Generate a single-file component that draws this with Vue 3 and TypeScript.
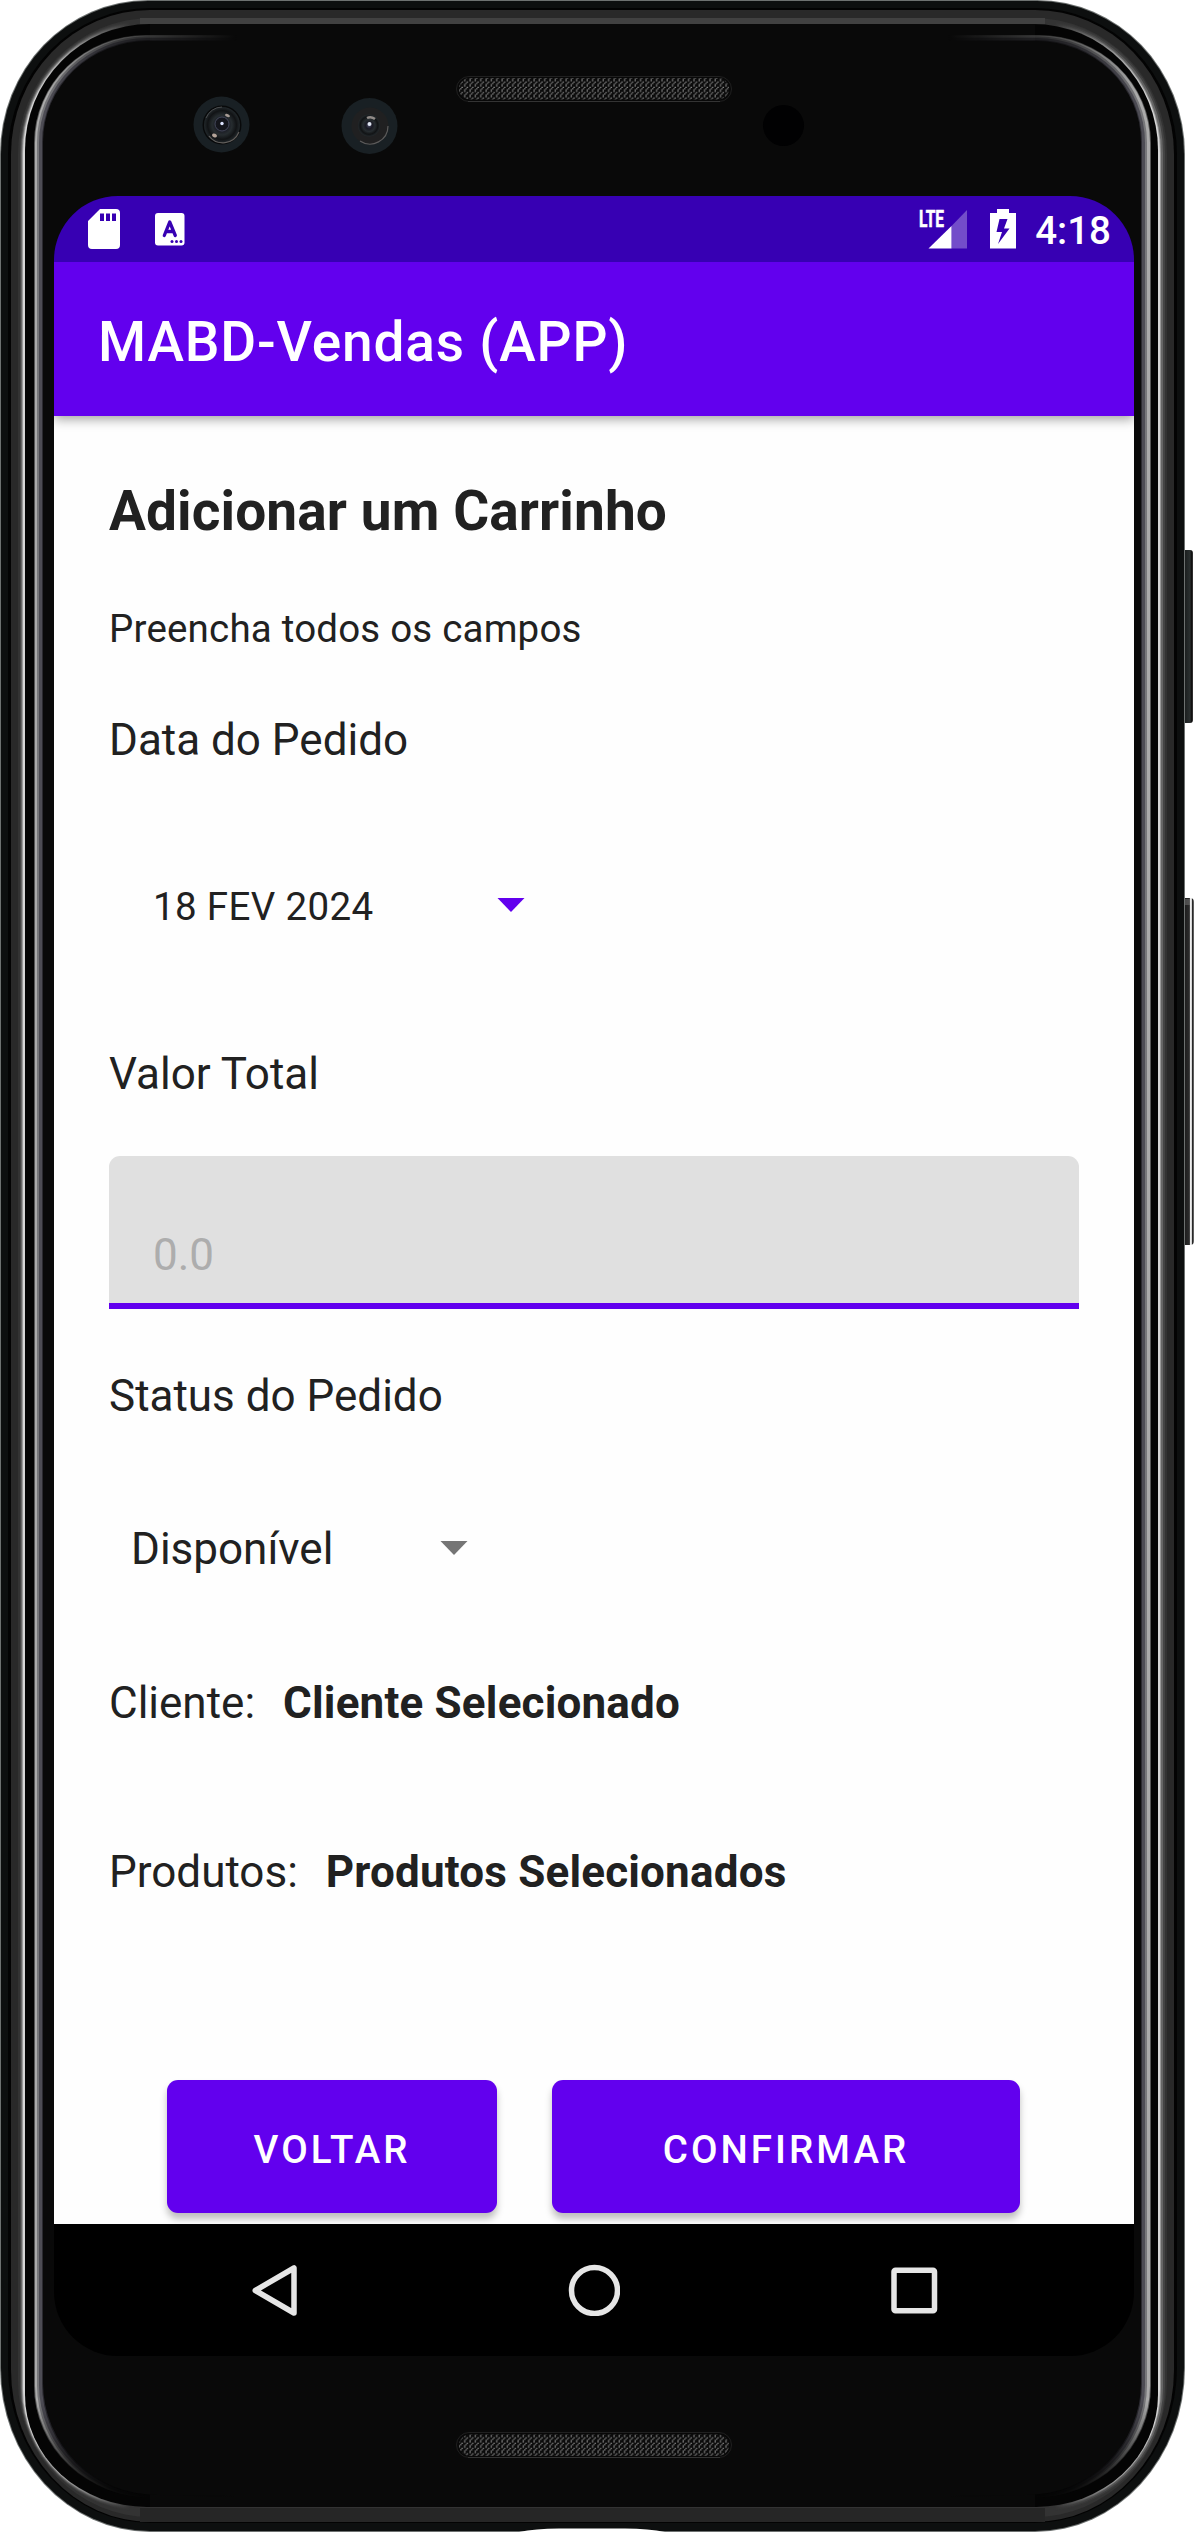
<script setup lang="ts">
import { ref } from 'vue'

interface Layer {
  d: string
  fill: string
}

interface Corner {
  rx: number
  ry: number
}

/** Closed outline with separate radii for the upper and the lower corners. */
function outline(l: number, t: number, r: number, b: number, up: Corner, low: Corner): string {
  return [
    `M${l} ${t + up.ry}`,
    `A${up.rx} ${up.ry} 0 0 1 ${l + up.rx} ${t}`,
    `H${r - up.rx}`,
    `A${up.rx} ${up.ry} 0 0 1 ${r} ${t + up.ry}`,
    `V${b - low.ry}`,
    `A${low.rx} ${low.ry} 0 0 1 ${r - low.rx} ${b}`,
    `H${l + low.rx}`,
    `A${low.rx} ${low.ry} 0 0 1 ${l} ${b - low.ry}Z`,
  ].join('')
}

const corner = (rx: number, ry: number): Corner => ({ rx, ry })

// Metal body, from the outside in
const body: Layer[] = [
  { d: outline(0, 0, 1185, 2532, corner(148, 154), corner(150, 164)), fill: '#6d7170' },
  { d: outline(1, 1, 1184, 2531, corner(147, 153), corner(149, 163)), fill: '#0d0f0f' },
  { d: outline(8, 8, 1177, 2523, corner(142, 147), corner(143, 156)), fill: '#030303' },
  { d: outline(11, 10, 1174, 2522, corner(139, 144), corner(140, 152)), fill: '#292929' },
  { d: outline(18, 18, 1167, 2517, corner(134, 136), corner(133, 136)), fill: '#333' },
]

// Bright bevel: drawn only on the sides and the corners
const bevel: Layer[] = [
  { d: outline(20, 19, 1165, 2512, corner(131, 134), corner(128, 125)), fill: '#444' },
  { d: outline(21, 20, 1163, 2511, corner(130, 133), corner(127, 123)), fill: '#666' },
  { d: outline(22, 21, 1161, 2510, corner(129, 132), corner(126, 121)), fill: '#999' },
  { d: outline(23, 22, 1160, 2509, corner(128, 131), corner(125, 119)), fill: '#d6d6d6' },
]

const glass = outline(25, 24, 1158, 2507, corner(125, 126), corner(122, 112))

const reflection: Layer[] = [
  { d: outline(34, 35, 1151, 2498, corner(112, 108), corner(118, 112)), fill: '#555' },
  { d: outline(35, 35.5, 1150, 2498, corner(111, 107), corner(118, 112)), fill: '#aaa' },
  { d: outline(37, 36.5, 1147, 2497.5, corner(109, 106), corner(117, 112)), fill: '#77777a' },
  { d: outline(39, 38, 1145, 2497, corner(108, 105), corner(116, 112)), fill: '#4d4c54' },
  { d: outline(42, 40, 1142, 2496, corner(106, 102), corner(115, 112)), fill: '#2b2a30' },
]

const panel = outline(43, 41, 1141, 2495, corner(105, 101), corner(114, 112))

const title = 'MABD-Vendas (APP)'
const clock = '4:18'
const orderDate = ref('18 FEV 2024')
const total = ref('')
const status = ref('Disponível')
const picks = [
  { label: 'Cliente:', value: 'Cliente Selecionado' },
  { label: 'Produtos:', value: 'Produtos Selecionados' },
]
</script>

<template>
  <div class="phone">
    <svg class="frame" width="1194" height="2532" viewBox="0 0 1194 2532" aria-hidden="true">
      <defs>
        <linearGradient id="sideFade" x1="0" x2="1185" y1="0" y2="0" gradientUnits="userSpaceOnUse">
          <stop offset="0.03" stop-color="#fff" />
          <stop offset="0.11" stop-color="#000" />
          <stop offset="0.89" stop-color="#000" />
          <stop offset="0.97" stop-color="#fff" />
        </linearGradient>
        <linearGradient id="longFade" x1="0" x2="1185" y1="0" y2="0" gradientUnits="userSpaceOnUse">
          <stop offset="0.04" stop-color="#fff" />
          <stop offset="0.1" stop-color="#777" />
          <stop offset="0.2" stop-color="#000" />
          <stop offset="0.8" stop-color="#000" />
          <stop offset="0.9" stop-color="#777" />
          <stop offset="0.96" stop-color="#fff" />
        </linearGradient>
        <linearGradient id="lowFade" x1="0" x2="0" y1="2400" y2="2500" gradientUnits="userSpaceOnUse">
          <stop offset="0" stop-color="#000" stop-opacity="0" />
          <stop offset="1" stop-color="#000" />
        </linearGradient>
        <mask id="sides" maskUnits="userSpaceOnUse" x="0" y="0" width="1194" height="2532">
          <rect width="1194" height="2532" fill="url(#sideFade)" />
        </mask>
        <mask id="arcs" maskUnits="userSpaceOnUse" x="0" y="0" width="1194" height="2532">
          <rect width="1194" height="2532" fill="url(#longFade)" />
          <rect y="2400" width="1194" height="132" fill="url(#lowFade)" />
        </mask>
        <pattern id="mesh" width="5.33" height="5.33" patternUnits="userSpaceOnUse">
          <rect width="5.33" height="5.33" fill="#0b0b0b" />
          <path d="M0.3 0.8H1.8M3 2.1H4.5M1.8 3.4H3.2M0.4 4.6H1.8" stroke="#868686" stroke-width="1" />
        </pattern>
        <linearGradient id="keyLow" x1="1184" x2="1194" y1="0" y2="0" gradientUnits="userSpaceOnUse">
          <stop offset="0" stop-color="#1b1b1b" />
          <stop offset="0.5" stop-color="#2b2b2b" />
          <stop offset="0.56" stop-color="#444" />
          <stop offset="0.64" stop-color="#eee" />
          <stop offset="0.74" stop-color="#eee" />
          <stop offset="0.82" stop-color="#222" />
          <stop offset="0.9" stop-color="#333" />
          <stop offset="1" stop-color="#888" />
        </linearGradient>
        <linearGradient id="keyTop" x1="1184" x2="1194" y1="0" y2="0" gradientUnits="userSpaceOnUse">
          <stop offset="0" stop-color="#181b1b" />
          <stop offset="0.6" stop-color="#2b3030" />
          <stop offset="0.75" stop-color="#111" />
          <stop offset="1" stop-color="#555" />
        </linearGradient>
        <radialGradient id="lens">
          <stop offset="0" stop-color="#4a4b66" />
          <stop offset="0.3" stop-color="#191a24" />
          <stop offset="0.55" stop-color="#262c2f" />
          <stop offset="0.8" stop-color="#111315" />
          <stop offset="1" stop-color="#22282b" />
        </radialGradient>
      </defs>

      <path d="M1183 550h7q3 0 3 3v167q0 3-3 3h-7z" fill="url(#keyTop)" />
      <path d="M1183 898h7q4 0 4 4v339q0 4-4 4h-7z" fill="url(#keyLow)" />
      <path d="M1184 899h6v6h-6z" fill="#777" opacity="0.5" />

      <path v-for="(layer, i) in body" :key="'b' + i" :d="layer.d" :fill="layer.fill" />
      <rect x="140" y="18" width="905" height="6" fill="#414141" />
      <rect x="140" y="2508" width="905" height="14" fill="#262626" />
      <g mask="url(#sides)">
        <path v-for="(layer, i) in bevel" :key="'v' + i" :d="layer.d" :fill="layer.fill" />
      </g>
      <path :d="glass" fill="#040404" />
      <path d="M150 24H1035V120H150zM150 2400H1035V2507H150z" fill="#090909" />
      <g mask="url(#arcs)">
        <path v-for="(layer, i) in reflection" :key="'r' + i" :d="layer.d" :fill="layer.fill" />
      </g>
      <path :d="panel" fill="#090909" />
      <path d="M519 2532q16-3.500 40-3.500h66q24 0 40 3.500z" fill="#fff" />

      <g>
        <circle cx="221.500" cy="124.500" r="28" fill="#192024" />
        <circle cx="222" cy="125" r="19.500" fill="#08090a" />
        <circle cx="222" cy="125" r="18" fill="url(#lens)" />
        <path d="M209 136a17.500 17.500 0 0 0 30-4" fill="none" stroke="#75706d" stroke-width="1.200" opacity="0.8" />
        <path d="M206 118a17.500 17.500 0 0 1 16-11" fill="none" stroke="#4a4c4e" stroke-width="1" />
        <circle cx="222" cy="124" r="7" fill="#14151c" stroke="#43475a" />
        <circle cx="222" cy="123.500" r="1.700" fill="#dde4ff" />
        <ellipse cx="227.500" cy="115.500" rx="2.600" ry="1.500" transform="rotate(25 227.500 115.500)" fill="#a89c96" />
        <ellipse cx="214.500" cy="135.500" rx="2.600" ry="1.800" transform="rotate(25 214.500 135.500)" fill="#b5a49a" />
      </g>
      <g>
        <circle cx="369.500" cy="126" r="28" fill="#192024" />
        <circle cx="370" cy="126" r="18.500" fill="#202021" />
        <path d="M360 141a18 18 0 0 0 28-15" fill="none" stroke="#5c5b5b" stroke-width="1.200" />
        <circle cx="369" cy="125.500" r="11" fill="url(#lens)" />
        <circle cx="369.500" cy="124" r="2" fill="#dfe5f2" />
        <path d="M367 118q4-2 8 1" fill="none" stroke="#918b88" stroke-width="2.500" />
      </g>
      <circle cx="783.500" cy="125.500" r="20.500" fill="#010102" />

      <rect x="456.500" y="76.500" width="275" height="25" rx="12.500" fill="#080808" stroke="#202020" />
      <rect x="459" y="78" width="270" height="21.500" rx="10.750" fill="url(#mesh)" />
      <path d="M468 101.500H720" stroke="#333" />
      <rect x="456.500" y="2432.500" width="275" height="25" rx="12.500" fill="#080808" stroke="#202020" />
      <rect x="459" y="2434.500" width="270" height="21.500" rx="10.750" fill="url(#mesh)" />
      <path d="M468 2457.500H720" stroke="#333" />
    </svg>

    <div class="screen">
      <header class="status-bar">
        <svg class="sd" width="32" height="40" viewBox="0 0 32 40">
          <path
            d="M12 0H28a4 4 0 0 1 4 4V36a4 4 0 0 1-4 4H4a4 4 0 0 1-4-4V12zM12 4.500V12h4V4.500zM18 4.500V12h4V4.500zM24 4.500V12h4V4.500z"
            fill="#fff"
            fill-rule="evenodd"
          />
        </svg>
        <svg class="keyboard" width="30" height="33" viewBox="0 0 30 33">
          <rect width="29.500" height="32.500" rx="3" fill="#fff" />
          <path d="M9.300 22.500L14.700 9L20.300 22.500M11.500 18.500H18" fill="none" stroke="#3700b3" stroke-width="3.300" stroke-linecap="round" stroke-linejoin="round" />
          <g fill="#3700b3">
            <circle cx="17" cy="28.500" r="1.500" />
            <circle cx="21.500" cy="28.500" r="1.500" />
            <circle cx="26" cy="28.500" r="1.500" />
          </g>
        </svg>
        <svg class="signal" width="50" height="40" viewBox="0 0 50 40">
          <text x="1" y="18.300" textLength="25" lengthAdjust="spacingAndGlyphs" class="lte">LTE</text>
          <path d="M10.500 39.500L33.500 17V39.500z" fill="#fff" />
          <path d="M33.500 17L49 1V39.500H33.500z" fill="#fff" opacity="0.3" />
        </svg>
        <svg class="battery" width="26" height="40" viewBox="0 0 26 40">
          <path d="M7 0H19V4H26V39.500H0V4H7zM9.500 10L6.500 23H12L8 35L19.500 19.500H14L17.500 10z" fill="#fff" fill-rule="evenodd" />
        </svg>
        <span class="clock">{{ clock }}</span>
      </header>

      <div class="app-bar">{{ title }}</div>

      <main class="content">
        <h1>Adicionar um Carrinho</h1>
        <p class="hint">Preencha todos os campos</p>

        <div class="label date-label">Data do Pedido</div>
        <div class="picker date">
          <span>{{ orderDate }}</span>
          <svg width="28" height="14" viewBox="0 0 28 14"><path d="M0.500 0H27.500L14 14z" fill="#6200ee" /></svg>
        </div>

        <div class="label total-label">Valor Total</div>
        <input v-model="total" class="field" placeholder="0.0" />

        <div class="label status-label">Status do Pedido</div>
        <div class="picker status">
          <span>{{ status }}</span>
          <svg width="28" height="14" viewBox="0 0 28 14"><path d="M0.500 0H27.500L14 14z" fill="#757575" /></svg>
        </div>

        <div v-for="pick in picks" :key="pick.label" class="pick">
          <span>{{ pick.label }}</span>
          <strong>{{ pick.value }}</strong>
        </div>

        <div class="actions">
          <button class="back">VOLTAR</button>
          <button class="confirm">CONFIRMAR</button>
        </div>
      </main>

      <nav class="nav-bar">
        <svg width="52" height="52" viewBox="0 0 52 52"><path d="M7.300 26.500L46 4V49z" /></svg>
        <svg width="52" height="52" viewBox="0 0 52 52"><circle cx="26.500" cy="26.500" r="23" /></svg>
        <svg width="52" height="52" viewBox="0 0 52 52"><rect x="6" y="6.300" width="40.500" height="40.500" rx="1.500" /></svg>
      </nav>
    </div>
  </div>
</template>

<style>
body {
  background: #fff;
}
</style>

<style scoped>
.phone {
  position: relative;
  box-sizing: border-box;
  width: 1194px;
  height: 2532px;
  padding: 196px 60px 176px 54px;
  overflow: hidden;
  font-family: Roboto, 'Liberation Sans', sans-serif;
  color: #212121;
}

.frame {
  position: absolute;
  inset: 0;
  display: block;
}

.screen {
  position: relative;
  display: flex;
  flex-direction: column;
  width: 1080px;
  height: 2160px;
}

.status-bar {
  display: flex;
  align-items: flex-start;
  box-sizing: border-box;
  flex: none;
  height: 66px;
  padding: 13px 23px 0 34px;
  border-radius: 64px 64px 0 0;
  background: #3700b3;
}

.keyboard {
  margin: 4px 0 0 35px;
}

.signal {
  margin-left: auto;
  overflow: visible;
}

.lte {
  font: 700 24px Roboto, sans-serif;
  fill: #fff;
  stroke: #fff;
  stroke-width: 0.6px;
}

.battery {
  margin-left: 22px;
}

.clock {
  margin-left: 19px;
  font-size: 38.5px;
  font-weight: 500;
  line-height: 44px;
  color: #fff;
}

.app-bar {
  position: relative;
  z-index: 1;
  flex: none;
  height: 154px;
  padding-left: 44px;
  background: #6200ee;
  box-shadow: 0 3px 11px rgba(0, 0, 0, 0.38);
  clip-path: inset(0 0 -20px 0);
  font-size: 55px;
  font-weight: 500;
  letter-spacing: 0.83px;
  line-height: 161px;
  color: #fff;
}

.content {
  display: flex;
  flex-direction: column;
  flex: 1;
  padding: 63px 55px 0;
  background: #fefefe;
}

h1 {
  margin: 0;
  font-size: 55px;
  font-weight: 700;
  letter-spacing: 0.1px;
  line-height: 64px;
}

.hint {
  margin: 60px 0 0;
  font-size: 38.5px;
  letter-spacing: 0.2px;
  line-height: 52px;
}

.label {
  font-size: 44px;
  line-height: 52px;
}

.date-label {
  margin-top: 59px;
}

.picker {
  display: flex;
  align-items: center;
  line-height: 52px;
}

.picker.date {
  justify-content: space-between;
  width: 372px;
  margin: 115px 0 0 44px;
  font-size: 38.5px;
  letter-spacing: 0.35px;
}

.picker.date svg {
  margin-bottom: 4px;
}

.total-label {
  margin-top: 115px;
}

.field {
  box-sizing: border-box;
  width: 100%;
  height: 153px;
  margin: 56px 0 0;
  padding: 73px 44px 22px;
  border: 0;
  border-bottom: 6px solid #6200ee;
  border-radius: 11px 11px 0 0;
  outline: 0;
  background: #e0e0e0;
  font: 44px/52px Roboto, sans-serif;
}

.field::placeholder {
  color: #adadad;
  opacity: 1;
}

.status-label {
  margin-top: 61px;
}

.picker.status {
  justify-content: space-between;
  width: 337px;
  margin: 101px 0 0 22px;
  font-size: 44px;
}

.picker.status svg {
  margin-bottom: 2px;
}

.pick {
  display: flex;
  gap: 28px;
  margin-top: 102px;
  font-size: 44px;
  line-height: 52px;
}

.pick strong {
  letter-spacing: 0.18px;
}

.pick + .pick {
  margin-top: 117px;
}

.actions {
  display: flex;
  gap: 55px;
  margin: 182px 0 0 58px;
}

button {
  height: 133px;
  padding: 5px 0 0;
  border: 0;
  border-radius: 11px;
  background: #6200ee;
  box-shadow: 0 6px 7px rgba(0, 0, 0, 0.25);
  font: 500 38.5px Roboto, sans-serif;
  letter-spacing: 3.05px;
  color: #fff;
}

.back {
  width: 330px;
}

.confirm {
  width: 468px;
}

.nav-bar {
  position: relative;
  display: flex;
  align-items: center;
  justify-content: center;
  gap: 268px;
  flex: none;
  height: 132px;
  border-radius: 0 0 64px 64px;
  background: #000;
}

.nav-bar svg {
  fill: none;
  stroke: #e6e6e6;
  stroke-width: 5.5;
  stroke-linejoin: round;
}
</style>
